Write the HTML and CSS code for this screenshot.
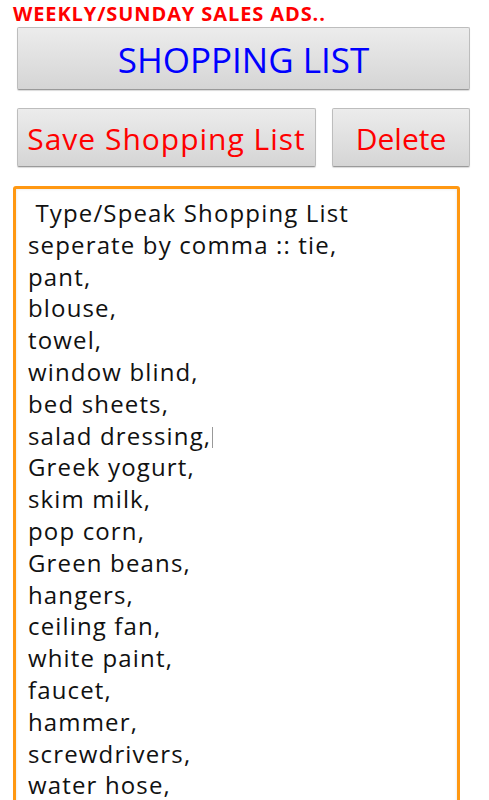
FILE: index.html
```html
<!DOCTYPE html>
<html lang="en">
<head>
    <meta charset="UTF-8">
    <meta name="viewport" content="width=device-width, initial-scale=1.0">
    <title>Shopping List</title>
    <link rel="stylesheet" href="styles.css">
</head>
<body>
    <div class="ads-title">WEEKLY/SUNDAY SALES ADS..</div>
    <button type="button" class="btn btn-list">SHOPPING LIST</button>
    <div class="btn-row">
        <button type="button" class="btn btn-save">Save Shopping List</button>
        <button type="button" class="btn btn-delete">Delete</button>
    </div>
    <div class="list-box">
        <div class="list-text">&nbsp;Type/Speak Shopping List
seperate by comma :: tie,
pant,
blouse,
towel,
window blind,
bed sheets,
salad dressing,<span class="caret"></span>
Greek yogurt,
skim milk,
pop corn,
Green beans,
hangers,
ceiling fan,
white paint,
faucet,
hammer,
screwdrivers,
water hose,</div>
    </div>
</body>
</html>
```

FILE: styles.css
```css
/* Basic page layout */
body {
    font-family: "Open Sans", "DejaVu Sans", sans-serif;
    background-color: #fff;
    margin: 0;
    height: 800px;
    overflow: hidden;
}
.ads-title {
    color: #ff0000;
    font-weight: bold;
    font-size: 20px;
    line-height: 27px;
    padding-left: 13px;
    letter-spacing: 0.9px;
}
.btn {
    display: flex;
    align-items: center;
    justify-content: center;
    border: 1px solid #bdbdbd;
    border-bottom-color: #9a9a9a;
    border-radius: 2px;
    background: linear-gradient(#ececec, #d5d5d5);
    box-shadow: 0 1px 1px rgba(0, 0, 0, 0.15);
    font-family: "Open Sans", "DejaVu Sans", sans-serif;
    padding: 0;
    cursor: pointer;
}
.btn-list {
    margin: 0 0 0 17px;
    width: 453px;
    height: 63px;
    color: #0000ff;
    font-size: 35px;
    padding-top: 2px;
}
.btn-row {
    display: flex;
    gap: 16px;
    margin: 18px 0 0 17px;
}
.btn-save,
.btn-delete {
    height: 59px;
    color: #ff0000;
    font-size: 30px;
    padding-top: 2px;
}
.btn-save {
    width: 299px;
    letter-spacing: 1px;
}
.btn-delete {
    width: 138px;
}
.list-box {
    margin: 19px 0 0 13px;
    width: 429px;
    height: 700px;
    border: 3px solid #ff9812;
    border-radius: 3px;
    box-shadow: inset 0 0 3px rgba(0, 0, 0, 0.12);
    padding: 8px 0 0 12px;
}
.list-text {
    white-space: pre-wrap;
    color: #111;
    font-size: 24px;
    line-height: 31.8px;
    letter-spacing: 1.15px;
}
.caret {
    display: inline-block;
    width: 1px;
    height: 21px;
    background-color: #999;
    vertical-align: -3px;
    margin-left: 1px;
}
```
